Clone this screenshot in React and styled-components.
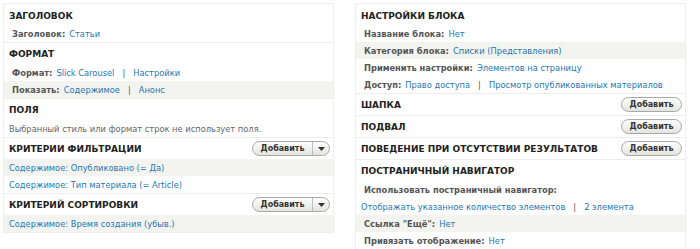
import styled, { createGlobalStyle } from 'styled-components';

const GlobalStyle = createGlobalStyle`
	body {
		margin: 0;
		background: #fff;
		font-family: "DejaVu Sans", "Noto Sans", sans-serif;
		font-size: 8.3px;
		color: #333;
	}
`;

const Page = styled.div`
	display: flex;
	align-items: flex-start;
	gap: 21px;
	padding: 3px 0 0 3px;
`;

const Column = styled.div`
	width: 331px;
	border: 1px solid #eeeeee;
	box-sizing: border-box;
	display: flex;
	flex-direction: column;
`;

const Section = styled.div`
	border-top: ${(p) => (p.first ? 'none' : '1px solid #ededed')};
`;

const Header = styled.div`
	height: 21px;
	padding-top: ${(p) => (p.first ? '2px' : '0')};
	box-sizing: border-box;
	display: flex;
	align-items: center;
	justify-content: space-between;
	padding-left: 5px;
	padding-right: 3px;
`;

const Title = styled.h2`
	margin: 0;
	font-size: 9px;
	font-weight: bold;
	text-transform: uppercase;
	color: #222;
`;

const Row = styled.div`
	height: 17px;
	display: flex;
	align-items: center;
	padding-left: ${(p) => (p.flush ? '5px' : '8px')};
	background: ${(p) => (p.odd ? '#f3f4ef' : 'transparent')};
	white-space: nowrap;
`;

const Label = styled.span`
	font-weight: bold;
	color: #555;
	margin-right: 4px;
`;

const Link = styled.a`
	color: #2477b5;
	text-decoration: none;
`;

const Sep = styled.span`
	color: #555;
	margin: 0 8px;
`;

const Note = styled.span`
	color: #666;
`;

const Pill = styled.div`
	display: flex;
	height: 15px;
	box-sizing: border-box;
	border: 1px solid #a8a8a8;
	border-radius: 10px;
	background: linear-gradient(#fdfdfb, #e4e4df);
	overflow: hidden;
`;

const PillButton = styled.button`
	border: none;
	background: transparent;
	font-family: inherit;
	font-size: 8px;
	font-weight: bold;
	color: #333;
	padding: 0;
	width: ${(p) => p.w}px;
	display: flex;
	align-items: center;
	justify-content: center;
	& + & {
		border-left: 1px solid #bdbdbd;
	}
`;

const Caret = () => (
	<svg width="7" height="4" viewBox="0 0 7 4">
		<path d="M0 0 H7 L3.5 4 Z" fill="#333" />
	</svg>
);

function AddButton({ drop }) {
	return (
		<Pill>
			<PillButton w={59}>Добавить</PillButton>
			{drop && (
				<PillButton w={17}>
					<Caret />
				</PillButton>
			)}
		</Pill>
	);
}

function Links({ items }) {
	return items.map((t, i) => (
		<span key={t}>
			{i > 0 && <Sep>|</Sep>}
			<Link href="#">{t}</Link>
		</span>
	));
}

export default function App() {
	return (
		<>
			<GlobalStyle />
			<Page>
				<Column>
					<Section first>
						<Header first><Title>Заголовок</Title></Header>
						<Row><Label>Заголовок:</Label><Link href="#">Статьи</Link></Row>
					</Section>
					<Section>
						<Header><Title>Формат</Title></Header>
						<Row><Label>Формат:</Label><Links items={['Slick Carousel', 'Настройки']} /></Row>
						<Row odd><Label>Показать:</Label><Links items={['Содержимое', 'Анонс']} /></Row>
					</Section>
					<Section>
						<Header><Title>Поля</Title></Header>
						<Row flush><Note>Выбранный стиль или формат строк не использует поля.</Note></Row>
					</Section>
					<Section>
						<Header><Title>Критерии фильтрации</Title><AddButton drop /></Header>
						<Row flush odd><Link href="#">Содержимое: Опубликовано (= Да)</Link></Row>
						<Row flush><Link href="#">Содержимое: Тип материала (= Article)</Link></Row>
					</Section>
					<Section>
						<Header><Title>Критерий сортировки</Title><AddButton drop /></Header>
						<Row flush odd><Link href="#">Содержимое: Время создания (убыв.)</Link></Row>
					</Section>
				</Column>
				<Column>
					<Section first>
						<Header first><Title>Настройки блока</Title></Header>
						<Row><Label>Название блока:</Label><Link href="#">Нет</Link></Row>
						<Row odd><Label>Категория блока:</Label><Link href="#">Списки (Представления)</Link></Row>
						<Row><Label>Применить настройки:</Label><Link href="#">Элементов на страницу</Link></Row>
						<Row><Label>Доступ:</Label><Links items={['Право доступа', 'Просмотр опубликованных материалов']} /></Row>
					</Section>
					<Section>
						<Header><Title>Шапка</Title><AddButton /></Header>
					</Section>
					<Section>
						<Header><Title>Подвал</Title><AddButton /></Header>
					</Section>
					<Section>
						<Header><Title>Поведение при отсутствии результатов</Title><AddButton /></Header>
					</Section>
					<Section>
						<Header><Title>Постраничный навигатор</Title></Header>
						<Row><Label>Использовать постраничный навигатор:</Label></Row>
						<Row flush><Links items={['Отображать указанное количество элементов', '2 элемента']} /></Row>
						<Row odd><Label>Ссылка "Ещё":</Label><Link href="#">Нет</Link></Row>
						<Row><Label>Привязать отображение:</Label><Link href="#">Нет</Link></Row>
					</Section>
				</Column>
			</Page>
		</>
	);
}
